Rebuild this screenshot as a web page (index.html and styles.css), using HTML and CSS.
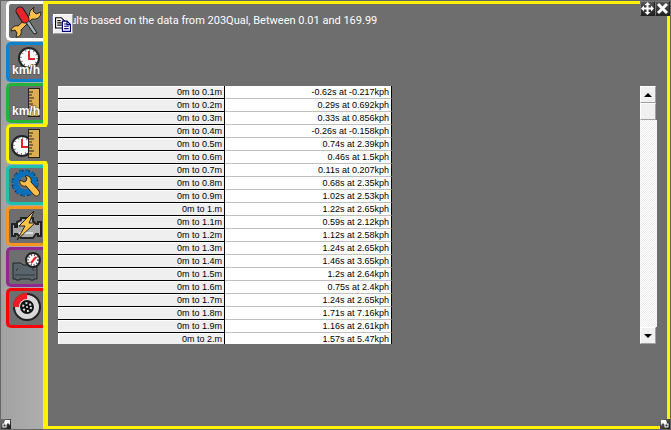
FILE: index.html
```
<!DOCTYPE html>
<html lang="en">
<head>
    <meta charset="UTF-8">
    <meta name="viewport" content="width=device-width, initial-scale=1.0">
    <title>Distance results</title>
    <link rel="stylesheet" href="styles.css">
</head>
<body>
    <div class="window">
        <nav class="tabs">
            <button class="tab tab-tools" aria-label="Tools">
                <svg viewBox="0 0 34 34">
                    <path d="M25 3l-4 4-1 5L9 22c-3-1-6 1-7 5l4-1 2 3-1 4c4 0 6-3 5-7l11-11c5 1 9-2 9-7l-5 2-3-3z" fill="#fcbf4a" stroke="#222"/>
                    <path d="M16 17l9 13 3-1-9-14z" fill="#a4b4bc" stroke="#222"/>
                    <path d="M11 7l5 8" stroke="#222" stroke-width="9" stroke-linecap="round"/>
                    <path d="M11 7l5 8" stroke="#e8232a" stroke-width="7" stroke-linecap="round"/>
                </svg>
            </button>
            <button class="tab tab-speed" aria-label="Speed over time">
                <svg viewBox="0 0 34 34">
                    <circle cx="20" cy="13" r="10" fill="#fff" stroke="#222" stroke-width="2"/>
                    <circle cx="20" cy="13" r="8" fill="none" stroke="#777" stroke-width="2" stroke-dasharray="1 3.190"/>
                    <path d="M20 6v8h6" fill="none" stroke="#e8232a" stroke-width="2"/>
                    <text class="unit" x="3" y="29">km/h</text>
                </svg>
            </button>
            <button class="tab tab-speed-distance" aria-label="Speed over distance">
                <svg viewBox="0 0 34 34">
                    <rect x="19.500" y="2.500" width="11" height="28" fill="#dcae50" stroke="#222"/>
                    <path d="M20 6h4M20 9h3M20 12h5M20 15h3M20 18h4M20 21h3M20 24h5M20 27h3" stroke="#222"/>
                    <text class="unit" x="3" y="29">km/h</text>
                </svg>
            </button>
            <button class="tab tab-distance active" aria-label="Time over distance">
                <svg viewBox="0 0 34 34">
                    <circle cx="13" cy="19" r="10" fill="#fff" stroke="#222" stroke-width="2"/>
                    <circle cx="13" cy="19" r="8" fill="none" stroke="#777" stroke-width="2" stroke-dasharray="1 3.190"/>
                    <path d="M13 12v8h6" fill="none" stroke="#e8232a" stroke-width="2"/>
                    <rect x="19.500" y="2.500" width="11" height="28" fill="#dcae50" stroke="#222"/>
                    <path d="M20 6h4M20 9h3M20 12h5M20 15h3M20 18h4M20 21h3M20 24h5M20 27h3" stroke="#222"/>
                </svg>
            </button>
            <button class="tab tab-setup" aria-label="Setup">
                <svg viewBox="0 0 34 34">
                    <circle cx="16" cy="15" r="11" fill="none" stroke="#0b3558" stroke-width="5" stroke-dasharray="4 1.760"/>
                    <circle cx="16" cy="15" r="9" fill="#6e6e6e" stroke="#0870bd" stroke-width="5"/>
                    <circle cx="16" cy="15" r="11" fill="none" stroke="#0870bd" stroke-width="4" stroke-dasharray="3 2.760"/>
                    <path d="M11 12l4 2 2-1 1-3-2-2c4-1 7 2 6 6l8 9c2 3-2 7-5 4l-8-9c-4 1-7-2-6-6z" fill="#fcbf4a" stroke="#222"/>
                </svg>
            </button>
            <button class="tab tab-engine" aria-label="Engine">
                <svg viewBox="0 0 34 34">
                    <path d="M3 15h3v3h2v-5l4-2V9h12v3l3 3h2v-2h3v14h-3v-2h-2l-3 4H12l-4-4H6v2H3z" fill="#aaa" stroke="#222" stroke-width="2"/>
                    <path d="M9 15h15M10 24h14" stroke="#ddd" stroke-width="2"/>
                    <path d="M25 2L10 17h6L8 31l18-17h-6z" fill="#fcc544" stroke="#222"/>
                </svg>
            </button>
            <button class="tab tab-pressure" aria-label="Pressure">
                <svg viewBox="0 0 34 34">
                    <path d="M4 13h8l2 2h14v14h-3v1h-4v-1H11v1H7v-1H4z" fill="#59646a" stroke="#222"/>
                    <path d="M6 25h20M9 18l-2 3M23 18l2 3" stroke="#303638"/>
                    <circle cx="24" cy="10" r="7" fill="#fff" stroke="#222" stroke-width="2"/>
                    <circle cx="24" cy="10" r="5" fill="none" stroke="#444" stroke-width="2" stroke-dasharray="1 2"/>
                    <path d="M22 13l5-6" stroke="#e8232a" stroke-width="2"/>
                </svg>
            </button>
            <button class="tab tab-brakes" aria-label="Brakes">
                <svg viewBox="0 0 34 34">
                    <circle cx="18" cy="16" r="13" fill="#d8d8d8" stroke="#222" stroke-width="2"/>
                    <path d="M18 16V2A14 14 0 0 0 4 16z" fill="#ed1c24"/>
                    <circle cx="18" cy="16" r="8" fill="#ddd"/>
                    <circle cx="18" cy="16" r="7" fill="#111"/>
                    <circle cx="18" cy="16" r="4" fill="none" stroke="#ddd" stroke-width="2" stroke-dasharray="2 2.190"/>
                    <circle cx="18" cy="16" r="1" fill="#ddd"/>
                </svg>
            </button>
        </nav>

        <main class="panel">
            <header class="heading">
                <button class="copy" aria-label="Copy">
                    <svg viewBox="1 1 14 14">
                        <path d="M1.500 2.500h5l3 3v6h-8z" fill="#fff" stroke="#000"/>
                        <path d="M3 5h3M3 7h4M3 9h4" stroke="#000"/>
                        <path d="M7.500 5.500h4l3 3v6h-7z" fill="#fff" stroke="#00007b"/>
                        <path d="M11.500 5.500v3h3M9 8h2M9 10h4M9 12h4" fill="none" stroke="#00007b"/>
                    </svg>
                </button>
                <p>Results based on the data from 203Qual, Between 0.01 and 169.99</p>
            </header>

            <div class="results">
                <div class="table-view">
                    <table>
                        <tbody>
                            <tr><th scope="row">0m to 0.1m</th><td>-0.62s at -0.217kph</td></tr>
                            <tr><th scope="row">0m to 0.2m</th><td>0.29s at 0.692kph</td></tr>
                            <tr><th scope="row">0m to 0.3m</th><td>0.33s at 0.856kph</td></tr>
                            <tr><th scope="row">0m to 0.4m</th><td>-0.26s at -0.158kph</td></tr>
                            <tr><th scope="row">0m to 0.5m</th><td>0.74s at 2.39kph</td></tr>
                            <tr><th scope="row">0m to 0.6m</th><td>0.46s at 1.5kph</td></tr>
                            <tr><th scope="row">0m to 0.7m</th><td>0.11s at 0.207kph</td></tr>
                            <tr><th scope="row">0m to 0.8m</th><td>0.68s at 2.35kph</td></tr>
                            <tr><th scope="row">0m to 0.9m</th><td>1.02s at 2.53kph</td></tr>
                            <tr><th scope="row">0m to 1.m</th><td>1.22s at 2.65kph</td></tr>
                            <tr><th scope="row">0m to 1.1m</th><td>0.59s at 2.12kph</td></tr>
                            <tr><th scope="row">0m to 1.2m</th><td>1.12s at 2.58kph</td></tr>
                            <tr><th scope="row">0m to 1.3m</th><td>1.24s at 2.65kph</td></tr>
                            <tr><th scope="row">0m to 1.4m</th><td>1.46s at 3.65kph</td></tr>
                            <tr><th scope="row">0m to 1.5m</th><td>1.2s at 2.64kph</td></tr>
                            <tr><th scope="row">0m to 1.6m</th><td>0.75s at 2.4kph</td></tr>
                            <tr><th scope="row">0m to 1.7m</th><td>1.24s at 2.65kph</td></tr>
                            <tr><th scope="row">0m to 1.8m</th><td>1.71s at 7.16kph</td></tr>
                            <tr><th scope="row">0m to 1.9m</th><td>1.16s at 2.61kph</td></tr>
                            <tr><th scope="row">0m to 2.m</th><td>1.57s at 5.47kph</td></tr>
                        </tbody>
                    </table>
                </div>
                <div class="scrollbar">
                    <button class="scroll-button" aria-label="Scroll up">
                        <svg viewBox="0 0 8 4"><path d="M0 4l4-4 4 4z"/></svg>
                    </button>
                    <button class="scroll-button" aria-label="Scroll position"></button>
                    <div class="track"></div>
                    <button class="scroll-button" aria-label="Scroll down">
                        <svg viewBox="0 0 8 4"><path d="M0 0l4 4 4-4z"/></svg>
                    </button>
                </div>
            </div>
        </main>

        <div class="window-buttons">
            <button aria-label="Move">
                <svg viewBox="0 0 13 13">
                    <path d="M6.500 0l3 3h-2v2.500H10v-2l3 3-3 3v-2H7.500V10h2l-3 3-3-3h2V7.500H3v2l-3-3 3-3v2h2.500V3h-2z" fill="#fff"/>
                </svg>
            </button>
            <button aria-label="Close">
                <svg viewBox="0 0 13 13">
                    <path d="M2 2l9 9M11 2l-9 9" stroke="#fff" stroke-width="3"/>
                </svg>
            </button>
        </div>
        <button class="resize resize-left" aria-label="Resize from left">
            <svg viewBox="0 0 10 10">
                <path d="M4 1h5v5L7 4 5 6 3 4z" fill="#fff"/>
                <rect x="2" y="5" width="3" height="3" fill="#333" stroke="#fff"/>
            </svg>
        </button>
        <button class="resize resize-right" aria-label="Resize from right">
            <svg viewBox="0 0 10 10">
                <path d="M6 1H1v5l2-2 2 2 2-2z" fill="#fff"/>
                <rect x="5" y="5" width="3" height="3" fill="#333" stroke="#fff"/>
            </svg>
        </button>
    </div>
</body>
</html>
```

FILE: styles.css
```
* {
    box-sizing: border-box;
}
body {
    margin: 0;
    font-family: "Liberation Sans", Arial, sans-serif;
}
button {
    margin: 0;
    padding: 0;
    border: none;
    cursor: pointer;
}
svg {
    display: block;
}
.window {
    position: relative;
    display: flex;
    height: 100vh;
    border: 1px solid #666;
    background-color: #6e6e6e;
}

/* side tabs */
.tabs {
    display: flex;
    flex-direction: column;
    gap: 1px;
    width: 42px;
    padding-left: 5px;
    background: linear-gradient(to right, #a2a2a2, #aeaeae);
}
.tab {
    position: relative;
    width: 37px;
    height: 40px;
    border: 3px solid;
    border-right: none;
    border-radius: 5px 0 0 5px;
    background-color: #6e6e6e;
}
.tab svg {
    width: 34px;
    height: 34px;
}
.tab-tools {
    border-color: #fff;
}
.tab-speed {
    border-color: #0a84d0;
}
.tab-speed-distance {
    border-color: #1fb53a;
}
.tab-distance {
    border-color: #fff200;
}
.tab-setup {
    border-color: #20c0b0;
}
.tab-engine {
    border-color: #f7941d;
}
.tab-pressure {
    border-color: #92278f;
}
.tab-brakes {
    border-color: #f00;
}
.tab.active {
    width: 42px;
    z-index: 1;
}
/* rounded ends where the panel border meets the open tab */
.tab.active::before,
.tab.active::after {
    content: "";
    position: absolute;
    right: 0;
    width: 5px;
    height: 3px;
}
.tab.active::before {
    top: -3px;
    background: radial-gradient(circle at 0 0, #fff200 4px, #6e6e6e 5px);
}
.tab.active::after {
    bottom: -3px;
    background: radial-gradient(circle at 0 100%, #fff200 4px, #6e6e6e 5px);
}
.unit {
    font-size: 12px;
    font-weight: bold;
    fill: #fff;
    stroke: #555;
    stroke-width: 1px;
    paint-order: stroke;
}

/* results panel */
.panel {
    display: flex;
    flex: 1;
    flex-direction: column;
    min-width: 0;
    padding: 10px;
    border: 3px solid #fff200;
    border-left-width: 5px;
}
.heading {
    position: relative;
    height: 72px;
    margin-left: -6px;
}
.heading p {
    margin: 0;
    font-family: Roboto, "Liberation Sans", sans-serif;
    font-size: 11px;
    line-height: 14px;
    color: #fff;
}
.copy {
    position: absolute;
    top: 0;
    left: 1px;
    width: 20px;
    height: 20px;
    padding: 1px;
    border: 1px solid #fff;
    border-right-color: #a0a0a0;
    border-bottom-color: #a0a0a0;
    background-color: #f0f0f0;
}
.results {
    display: flex;
    flex: 1;
    justify-content: space-between;
    min-height: 0;
    margin-bottom: 72px;
}
.table-view {
    overflow: hidden;
}
table {
    width: 334px;
    border-collapse: separate;
    border-spacing: 0;
    table-layout: fixed;
    background-color: #fff;
    font-size: 9px;
    line-height: 12px;
}
th, td {
    height: 13px;
    padding: 0 2px;
    border-right: 1px solid #000;
    border-bottom: 1px solid #c0c0c0;
    font-weight: normal;
    text-align: right;
    white-space: nowrap;
}
th {
    border-bottom-color: #000;
    background-color: #efefef;
    box-shadow: inset 1px 1px #fff;
}
.scrollbar {
    display: flex;
    flex-direction: column;
    width: 17px;
}
.scroll-button {
    display: flex;
    align-items: center;
    justify-content: center;
    width: 16px;
    height: 17px;
    border: 1px solid #fff;
    border-right-color: #a0a0a0;
    border-bottom-color: #a0a0a0;
    background-color: #f0f0f0;
}
.scroll-button svg {
    width: 8px;
    height: 4px;
}
.track {
    flex: 1;
    background: repeating-conic-gradient(#fff 0 25%, #ececec 0 50%) 0 0 / 2px 2px;
}

/* window controls */
.window-buttons {
    position: absolute;
    top: 0;
    right: 0;
    display: flex;
}
.window-buttons button {
    width: 15px;
    height: 15px;
    border: 1px solid #222;
    border-top-color: #777;
    border-left-color: #777;
    background: linear-gradient(#555, #222);
}
.resize {
    position: absolute;
    bottom: 0;
    width: 10px;
    height: 10px;
    background: linear-gradient(135deg, #777, #111);
}
.resize-left {
    left: 0;
}
.resize-right {
    right: 0;
}
```
